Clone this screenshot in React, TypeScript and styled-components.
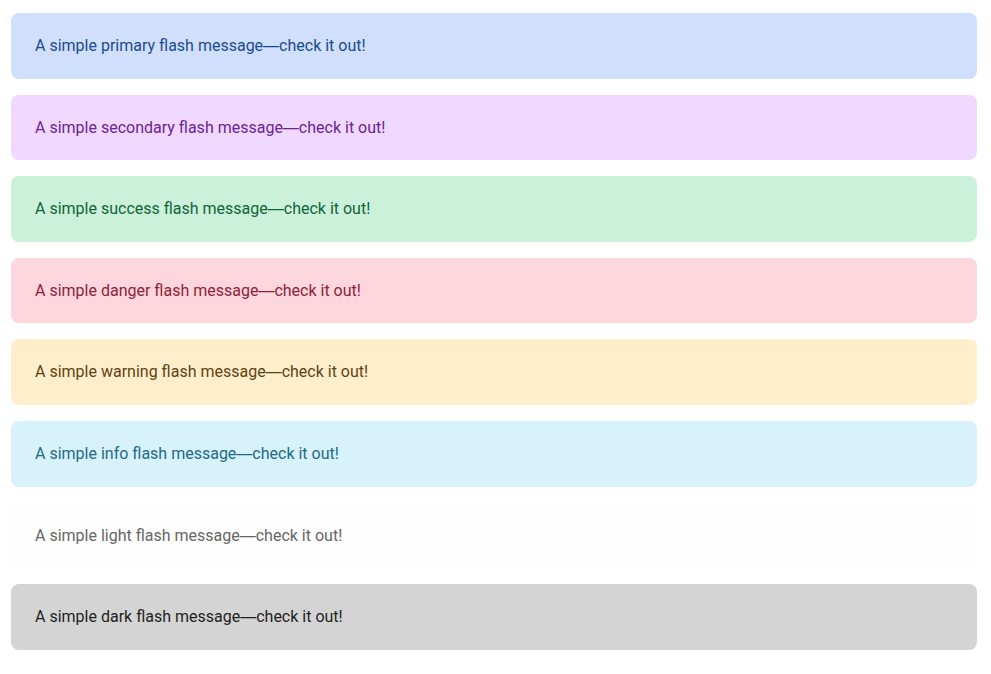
import React from "react";
import styled, { createGlobalStyle } from "styled-components";

const GlobalStyle = createGlobalStyle`
  html, body {
    margin: 0;
    padding: 0;
    background: #ffffff;
  }
  body {
    font-family: Roboto, "Liberation Sans", Arial, sans-serif;
    font-size: 16px;
    line-height: 1.6;
  }
`;

type Variant =
  | "primary"
  | "secondary"
  | "success"
  | "danger"
  | "warning"
  | "info"
  | "light"
  | "dark";

const palette: Record<Variant, { bg: string; fg: string }> = {
  primary: { bg: "#d0e0fc", fg: "#1c4a90" },
  secondary: { bg: "#f0d8ff", fg: "#6a2496" },
  success: { bg: "#ccf1db", fg: "#0e6637" },
  danger: { bg: "#fed6dd", fg: "#8f2236" },
  warning: { bg: "#ffeecc", fg: "#604210" },
  info: { bg: "#d7f2fb", fg: "#1f6a86" },
  light: { bg: "#fefefe", fg: "#666666" },
  dark: { bg: "#d4d4d4", fg: "#1f1f1f" },
};

const Stack = styled.div`
  display: flex;
  flex-direction: column;
  gap: 16px;
  padding: 13px 14px 0 11px;
`;

const Alert = styled.div<{ $variant: Variant }>`
  padding: 20px 24px;
  border-radius: 8px;
  font-size: 16px;
  line-height: 25.6px;
  font-weight: 400;
  background-color: ${(p) => palette[p.$variant].bg};
  color: ${(p) => palette[p.$variant].fg};
`;

const Dash = styled.span`
  font-family: "Liberation Sans", Arial, sans-serif;
`;

const variants: Variant[] = [
  "primary",
  "secondary",
  "success",
  "danger",
  "warning",
  "info",
  "light",
  "dark",
];

export default function App() {
  return (
    <>
      <GlobalStyle />
      <Stack>
        {variants.map((v) => (
          <Alert key={v} $variant={v} role="alert">
            A simple {v} flash message<Dash>—</Dash>check it out!
          </Alert>
        ))}
      </Stack>
    </>
  );
}
